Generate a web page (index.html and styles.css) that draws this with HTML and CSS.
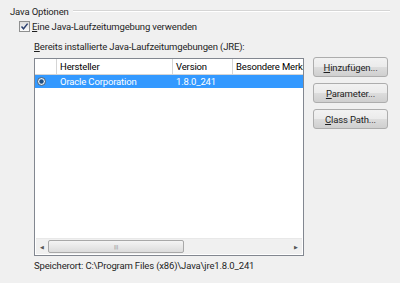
FILE: index.html
```html
<!DOCTYPE html>
<html lang="de">
<head>
    <meta charset="UTF-8">
    <title>Java Optionen</title>
    <link rel="stylesheet" href="styles.css">
</head>
<body>
    <div class="group">
        <div class="group-title">
            <span>Java Optionen</span>
            <div class="group-line"></div>
        </div>

        <label class="check">
            <span class="box">
                <svg width="9" height="9" viewBox="0 0 9 9"><path d="M1.5 4.5 L3.5 6.8 L7.6 1.6" fill="none" stroke="#2a3f6e" stroke-width="1.4"/></svg>
            </span>
            <span><u>E</u>ine Java-Laufzeitumgebung verwenden</span>
        </label>

        <div class="jre-label"><u>B</u>ereits installierte Java-Laufzeitumgebungen (JRE):</div>

        <div class="jre-area">
            <div class="table">
                <div class="head">
                    <div class="cell c0"></div>
                    <div class="cell c1">Hersteller</div>
                    <div class="cell c2">Version</div>
                    <div class="cell c3">Besondere Merkmale</div>
                </div>
                <div class="row selected">
                    <div class="cell c0">
                        <svg width="9" height="9" viewBox="0 0 9 9"><circle cx="4.5" cy="4.5" r="4" fill="#e8eef4" stroke="#3d5a78"/><circle cx="4.5" cy="4.5" r="2.2" fill="#1f4f82"/></svg>
                    </div>
                    <div class="cell c1">Oracle Corporation</div>
                    <div class="cell c2">1.8.0_241</div>
                    <div class="cell c3"></div>
                </div>
                <div class="filler"></div>
                <div class="hscroll">
                    <div class="arrow">&#9664;</div>
                    <div class="track">
                        <div class="thumb">|||</div>
                    </div>
                    <div class="arrow">&#9654;</div>
                </div>
            </div>

            <div class="buttons">
                <button><u>H</u>inzufügen...</button>
                <button><u>P</u>arameter...</button>
                <button><u>C</u>lass Path...</button>
            </div>
        </div>

        <div class="location">Speicherort: C:\Program Files (x86)\Java\jre1.8.0_241</div>
    </div>
</body>
</html>
```

FILE: styles.css
```css
body {
    margin: 0;
    background-color: #f0f0f0;
    font-family: Roboto, "Open Sans", sans-serif;
    font-size: 9.5px;
    letter-spacing: -0.15px;
    color: #1e1e1e;
    width: 400px;
    height: 283px;
    overflow: hidden;
}

.group {
    padding: 4px 10px 0 10px;
}

.group-title {
    display: flex;
    align-items: center;
    gap: 4px;
    height: 14px;
}

.group-line {
    flex: 1;
    height: 1px;
    background-color: #d5d5d5;
    border-bottom: 1px solid #fff;
}

.check {
    display: flex;
    align-items: center;
    gap: 2px;
    margin: 1px 0 0 9px;
    height: 14px;
}

.box {
    width: 9px;
    height: 9px;
    border: 1px solid #8e8f8f;
    background: linear-gradient(#dcdcdc, #fbfbfb);
    display: flex;
}

.jre-label {
    margin: 8px 0 0 24px;
    height: 14px;
}

.jre-area {
    display: flex;
    margin: 2px 0 0 24px;
    gap: 9px;
}

.table {
    width: 268px;
    height: 196px;
    margin-top: 1px;
    border: 1px solid #828790;
    background-color: #fff;
    display: flex;
    flex-direction: column;
}

.head, .row {
    display: flex;
    height: 15px;
}

.head {
    border-bottom: 1px solid #d5d5d5;
    color: #000;
}

.cell {
    padding-left: 3px;
    white-space: nowrap;
    overflow: hidden;
    line-height: 15px;
    box-sizing: border-box;
}

.head .cell {
    border-right: 1px solid #d5d5d5;
}

.c0 { width: 22px; display: flex; align-items: center; padding-left: 2px; }
.c1 { width: 116px; }
.c2 { width: 60px; }
.c3 { flex: 1; }

.head .c3 { border-right: none; }

.row.selected {
    background-color: #3399ff;
    color: #fff;
    height: 13px;
}

.row.selected .cell {
    line-height: 13px;
}

.filler {
    flex: 1;
}

.hscroll {
    display: flex;
    height: 15px;
    margin: 0 1px 1px 1px;
    background-color: #f0f0f0;
    border-top: 1px solid #e8e8e8;
}

.arrow {
    width: 12px;
    font-size: 5px;
    color: #555;
    display: flex;
    align-items: center;
    justify-content: center;
}

.track {
    flex: 1;
}

.thumb {
    width: 136px;
    height: 13px;
    margin-top: 1px;
    border: 1px solid #a8a8a8;
    border-radius: 2px;
    box-sizing: border-box;
    background: linear-gradient(#f4f4f4, #dcdcdc);
    font-size: 6px;
    color: #8a8a8a;
    text-align: center;
    line-height: 11px;
}

.buttons {
    display: flex;
    flex-direction: column;
    gap: 6px;
}

button {
    width: 75px;
    height: 20px;
    font-family: Roboto, "Open Sans", sans-serif;
    font-size: 9.5px;
    letter-spacing: -0.15px;
    color: #1e1e1e;
    border: 1px solid #adadad;
    border-radius: 3px;
    background: linear-gradient(#f2f2f2 0%, #ebebeb 50%, #dddddd 51%, #cfcfcf 100%);
    padding: 0;
}

.location {
    margin: 4px 0 0 24px;
}
```
